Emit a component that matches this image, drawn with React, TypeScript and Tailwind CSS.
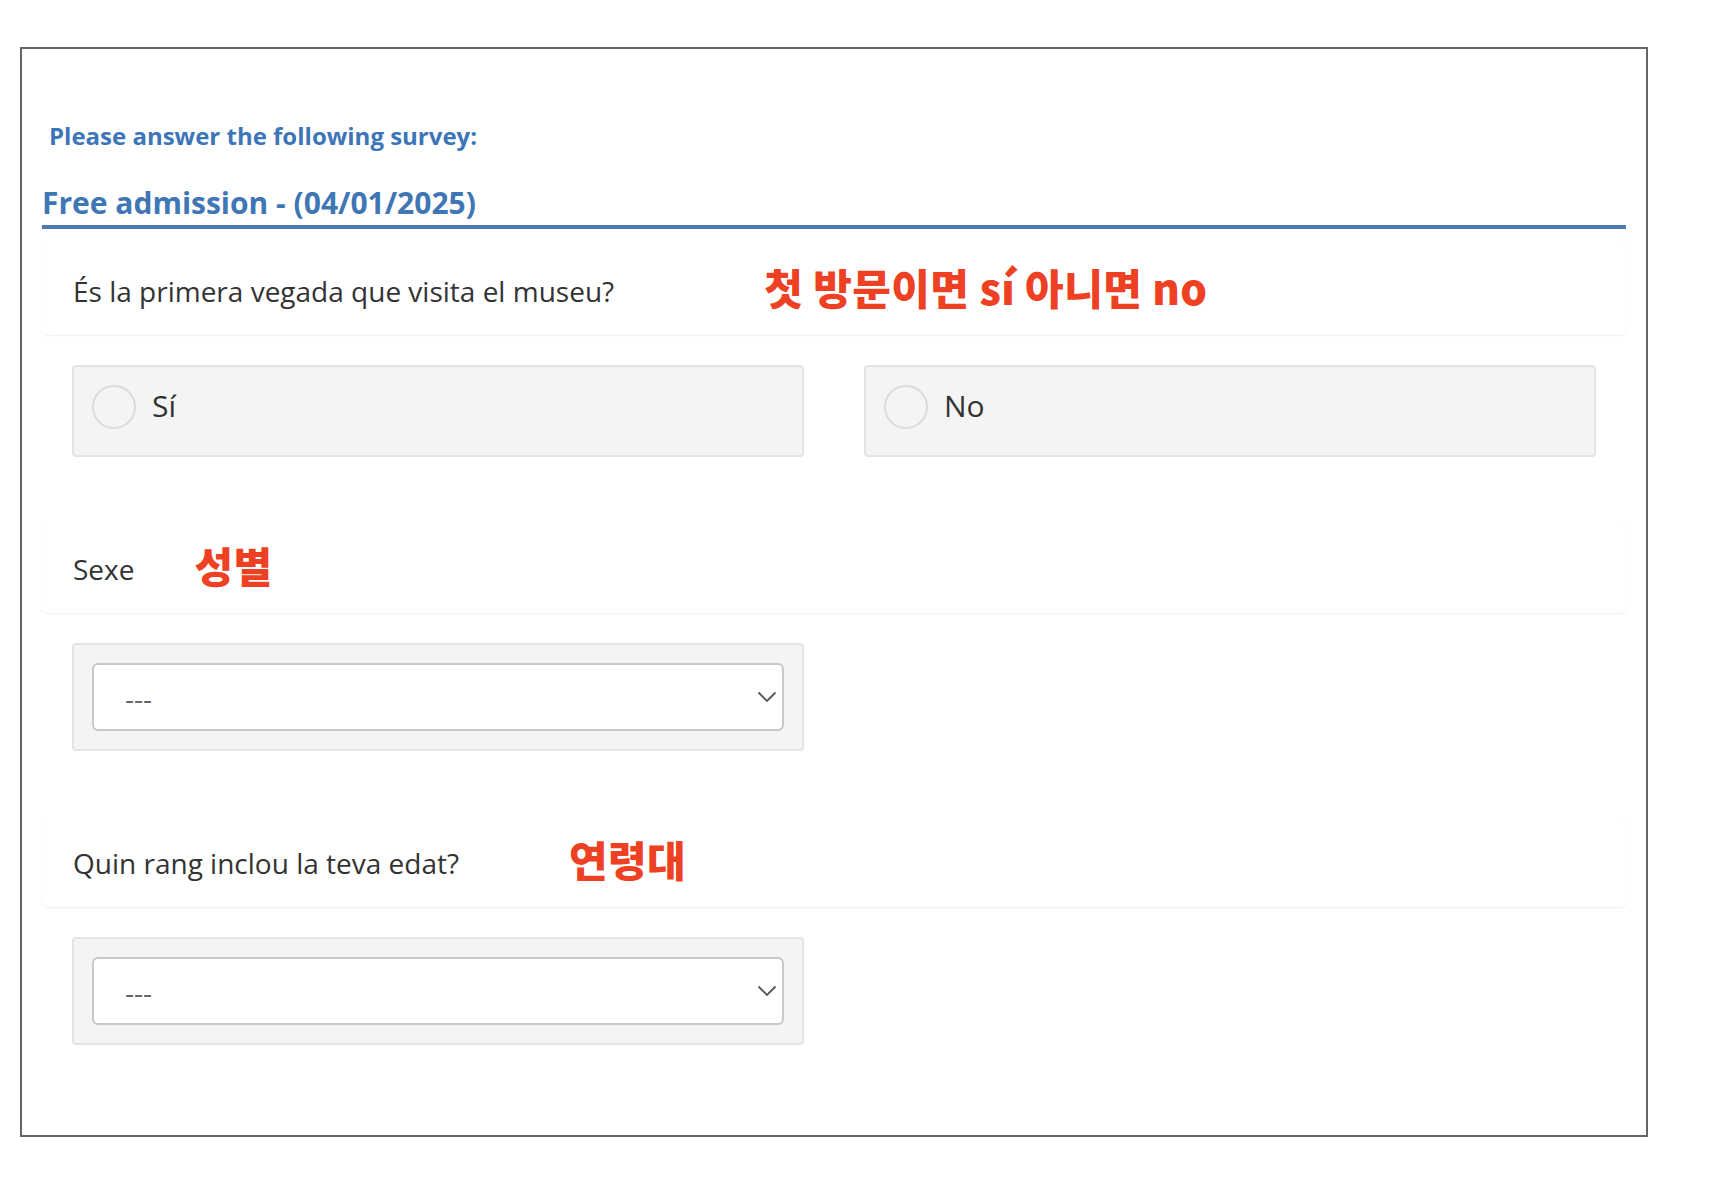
import { ChangeEvent, useState } from 'react';

const fontOpen = '[font-family:"Open_Sans",sans-serif]';

const QuestionCard = ({ label, note, noteGap, className }: { label: string; note: string; noteGap: string; className: string }) => (
  <div className={`flex h-[89px] items-center rounded-md bg-white pl-[31px] shadow-[0_1px_2px_rgba(0,0,0,0.07)] ${className}`}>
    <span className="text-[28px] leading-none text-[#333]">{label}</span>
    <span className={`text-[42px] font-black leading-none tracking-[0.4px] text-[#ee4123] -mt-[8px] [font-family:"Noto_Sans_CJK_KR",sans-serif] ${noteGap}`}>{note}</span>
  </div>
);

const RadioBox = ({ label, checked, onPick }: { label: string; checked: boolean; onPick: () => void }) => (
  <label className="flex h-[92px] w-[732px] cursor-pointer items-start rounded-[4px] border-2 border-[#e4e4e4] bg-[#f4f4f4] pl-[18px] pt-[18px]">
    <input type="radio" checked={checked} onChange={onPick} className="h-[44px] w-[44px] appearance-none rounded-full border-2 border-[#dcdad5] bg-[#f4f4f4] checked:bg-[#3c76b8]" />
    <span className="ml-[16px] mt-[3px] text-[30px] leading-[36px] text-[#333]">{label}</span>
  </label>
);

const SelectBox = ({ value, onChange, className }: { value: string; onChange: (e: ChangeEvent<HTMLSelectElement>) => void; className: string }) => (
  <div className={`h-[108px] w-[732px] rounded-[4px] border-2 border-[#e4e4e4] bg-[#f4f4f4] pl-[18px] pt-[18px] ${className}`}>
    <div className="relative h-[68px] w-[692px]">
      <select value={value} onChange={onChange} className="h-full w-full appearance-none rounded-[6px] border-2 border-[#c8c8c8] bg-white pl-[31px] pt-[2px] text-[28px] text-[#666] outline-none">
        <option value="">---</option>
      </select>
      <svg className="pointer-events-none absolute right-[7px] top-[28px]" width="20" height="12" viewBox="0 0 20 12" fill="none">
        <path d="M1.5 1.5 L10 10 L18.5 1.5" stroke="#555" strokeWidth="1.8" />
      </svg>
    </div>
  </div>
);

const App = () => {
  const [first, setFirst] = useState('');
  const [sex, setSex] = useState('');
  const [age, setAge] = useState('');

  return (
    <div className={`min-h-[1184px] bg-white pl-[20px] pt-[47px] ${fontOpen}`}>
      <div className="h-[1090px] w-[1628px] border-2 border-[#666] pl-[20px] pr-[20px] pt-[69px]">
        <p className="pl-[7px] text-[24px] font-bold leading-[36px] text-[#3c76b8]">Please answer the following survey:</p>

        <h2 className="mt-[28px] border-b-4 border-[#4a7ab5] pb-[1px] text-[30px] font-bold leading-[42px] text-[#3f76b4]">Free admission - (04/01/2025)</h2>

        <QuestionCard label="És la primera vegada que visita el museu?" note="첫 방문이면 sí 아니면 no" noteGap="ml-[150px]" className="mt-[17px]" />

        <div className="mt-[30px] flex gap-[60px] pl-[30px]">
          <RadioBox label="Sí" checked={first === 'si'} onPick={() => setFirst('si')} />
          <RadioBox label="No" checked={first === 'no'} onPick={() => setFirst('no')} />
        </div>

        <QuestionCard label="Sexe" note="성별" noteGap="ml-[60px]" className="mt-[67px]" />
        <div className="pl-[30px]">
          <SelectBox value={sex} onChange={(e) => setSex(e.target.value)} className="mt-[30px]" />
        </div>

        <QuestionCard label="Quin rang inclou la teva edat?" note="연령대" noteGap="ml-[110px]" className="mt-[67px]" />
        <div className="pl-[30px]">
          <SelectBox value={age} onChange={(e) => setAge(e.target.value)} className="mt-[30px]" />
        </div>
      </div>
    </div>
  );
};

export default App;
